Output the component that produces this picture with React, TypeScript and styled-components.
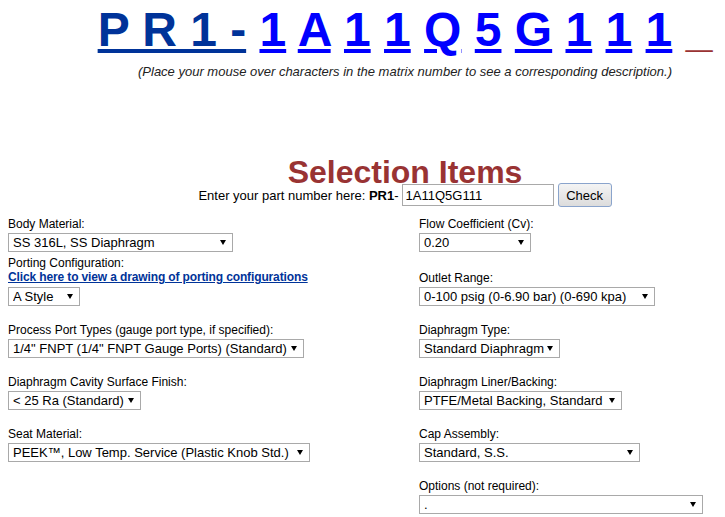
import styled, { createGlobalStyle } from "styled-components";

const GlobalStyle = createGlobalStyle`
  body {
    margin: 0;
    background: #fff;
    color: #000;
    font-family: "Liberation Sans", Arial, sans-serif;
  }
`;

const Top = styled.div`
  margin-left: 85px;
  width: 640px;
  text-align: center;
`;

const PartNumber = styled.div`
  margin-top: 6px;
  font-size: 48px;
  font-weight: bold;
  line-height: 48px;
  white-space: nowrap;
`;

const Char = styled.a<{ $prefix?: boolean }>`
  color: ${(p) => (p.$prefix ? "#003399" : "#0000ff")};
  text-decoration: underline;
  cursor: pointer;
`;

const Blank = styled.span`
  color: #993333;
`;

const Hint = styled.div`
  margin-top: 10px;
  font-size: 13px;
  font-style: italic;
  line-height: 15px;
  color: #222;
`;

const Heading = styled.h1`
  margin: 85px 0 0;
  font-size: 32px;
  font-weight: bold;
  line-height: 16px;
  color: #993333;
`;

const EnterRow = styled.div`
  display: flex;
  justify-content: center;
  align-items: center;
  height: 24px;
  margin-top: 3px;
  font-size: 13px;
`;

const PartInput = styled.input`
  box-sizing: border-box;
  width: 152px;
  height: 22px;
  margin-left: 3px;
  padding: 0 3px;
  border: 1px solid #a9a9a9;
  font-family: "Liberation Sans", Arial, sans-serif;
  font-size: 13px;
  color: #000;
  outline: none;
`;

const CheckButton = styled.button`
  box-sizing: border-box;
  width: 54px;
  height: 24px;
  margin-left: 4px;
  padding: 0;
  border: 1px solid #8aa4cc;
  border-radius: 3px;
  background: linear-gradient(#f4f4f4, #dcdcdc);
  font-family: "Liberation Sans", Arial, sans-serif;
  font-size: 13px;
  color: #000;
`;

const Columns = styled.div`
  display: grid;
  grid-template-columns: 411px 1fr;
  margin-top: 10px;
  padding-left: 8px;
`;

const Column = styled.div`
  display: flex;
  flex-direction: column;
  align-items: flex-start;
`;

const Field = styled.div<{ $after: number }>`
  display: flex;
  flex-direction: column;
  align-items: flex-start;
  margin-bottom: ${(p) => p.$after}px;
`;

const Label = styled.label`
  display: block;
  font-size: 12px;
  line-height: 14px;
`;

const DrawingLink = styled.a`
  display: block;
  font-size: 12px;
  font-weight: bold;
  letter-spacing: -0.13px;
  line-height: 15px;
  color: #003399;
  text-decoration: underline;
`;

const SelectBox = styled.div<{ $width: number }>`
  position: relative;
  width: ${(p) => p.$width}px;
  margin-top: 2px;

  &::after {
    content: "";
    position: absolute;
    right: 7px;
    top: 7px;
    border-left: 3px solid transparent;
    border-right: 3px solid transparent;
    border-top: 5px solid #000;
    pointer-events: none;
  }
`;

const Select = styled.select`
  box-sizing: border-box;
  display: block;
  width: 100%;
  height: 19px;
  margin: 0;
  padding: 0 0 0 4px;
  border: 1px solid #a9a9a9;
  border-radius: 0;
  background: #fff;
  appearance: none;
  -webkit-appearance: none;
  font-family: "Liberation Sans", Arial, sans-serif;
  font-size: 13px;
  line-height: 17px;
  color: #000;
  outline: none;
`;

function Dropdown({ width, value }: { width: number; value: string }) {
  return (
    <SelectBox $width={width}>
      <Select defaultValue={value}>
        <option value={value}>{value}</option>
      </Select>
    </SelectBox>
  );
}

const codeChars = ["1", "A", "1", "1", "Q", "5", "G", "1", "1", "1"];

export default function App() {
  return (
    <>
      <GlobalStyle />
      <Top>
        <PartNumber>
          <Char $prefix>P R 1 -</Char>{" "}
          {codeChars.map((c, i) => (
            <span key={i}>
              <Char>{c}</Char>{" "}
            </span>
          ))}
          <Blank>_</Blank>
        </PartNumber>
        <Hint>
          (Place your mouse over characters in the matrix number to see a
          corresponding description.)
        </Hint>
        <Heading>Selection Items</Heading>
        <EnterRow>
          <span>
            Enter your part number here: <b>PR1</b>-
          </span>
          <PartInput defaultValue="1A11Q5G111" />
          <CheckButton>Check</CheckButton>
        </EnterRow>
      </Top>

      <Columns>
        <Column>
          <Field $after={4}>
            <Label>Body Material:</Label>
            <Dropdown width={225} value="SS 316L, SS Diaphragm" />
          </Field>
          <Field $after={17}>
            <Label>Porting Configuration:</Label>
            <DrawingLink href="#">
              Click here to view a drawing of porting configurations
            </DrawingLink>
            <Dropdown width={72} value="A Style" />
          </Field>
          <Field $after={17}>
            <Label>Process Port Types (gauge port type, if specified):</Label>
            <Dropdown
              width={296}
              value={'1/4" FNPT (1/4" FNPT Gauge Ports) (Standard)'}
            />
          </Field>
          <Field $after={17}>
            <Label>Diaphragm Cavity Surface Finish:</Label>
            <Dropdown width={133} value="< 25 Ra (Standard)" />
          </Field>
          <Field $after={17}>
            <Label>Seat Material:</Label>
            <Dropdown
              width={302}
              value="PEEK™, Low Temp. Service (Plastic Knob Std.)"
            />
          </Field>
        </Column>

        <Column>
          <Field $after={19}>
            <Label>Flow Coefficient (Cv):</Label>
            <Dropdown width={112} value="0.20" />
          </Field>
          <Field $after={17}>
            <Label>Outlet Range:</Label>
            <Dropdown width={236} value="0-100 psig (0-6.90 bar) (0-690 kpa)" />
          </Field>
          <Field $after={17}>
            <Label>Diaphragm Type:</Label>
            <Dropdown width={141} value="Standard Diaphragm" />
          </Field>
          <Field $after={17}>
            <Label>Diaphragm Liner/Backing:</Label>
            <Dropdown width={203} value="PTFE/Metal Backing, Standard" />
          </Field>
          <Field $after={17}>
            <Label>Cap Assembly:</Label>
            <Dropdown width={221} value="Standard, S.S." />
          </Field>
          <Field $after={0}>
            <Label>Options (not required):</Label>
            <Dropdown width={284} value="." />
          </Field>
        </Column>
      </Columns>
    </>
  );
}
